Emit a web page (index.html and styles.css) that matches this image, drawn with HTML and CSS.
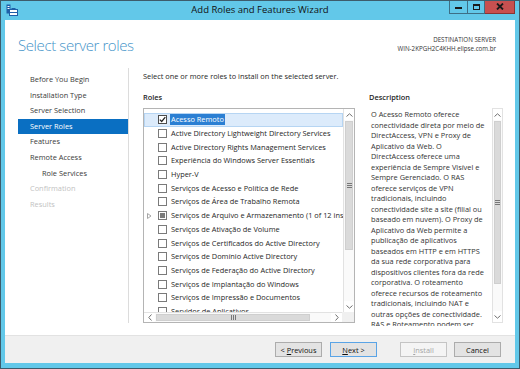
FILE: index.html
```html
<!DOCTYPE html>
<html lang="pt-BR">
<head>
  <meta charset="UTF-8">
  <title>Add Roles and Features Wizard</title>
  <link rel="stylesheet" href="styles.css">
</head>
<body>
<div class="window">
  <div class="titlebar">
    <div class="app-icon">
      <svg width="12" height="12" viewBox="0 0 12 12">
        <rect x="0.5" y="0.5" width="4" height="9" fill="#1f5fa8"/>
        <rect x="1.5" y="2" width="2" height="1" fill="#fff"/>
        <rect x="1.5" y="4" width="2" height="1" fill="#fff"/>
        <rect x="3.5" y="5.5" width="8" height="6" fill="#fff" stroke="#1f5fa8"/>
        <rect x="6" y="4.5" width="3" height="1" fill="none" stroke="#1f5fa8"/>
        <line x1="3.5" y1="8.5" x2="11.5" y2="8.5" stroke="#1f5fa8"/>
      </svg>
    </div>
    <div class="title">Add Roles and Features Wizard</div>
    <div class="caption-buttons">
      <span class="cap-btn cap-min"><svg width="7" height="6" viewBox="0 0 7 6"><rect x="0" y="3" width="7" height="2" fill="#1a1a1a"/></svg></span>
      <span class="cap-btn cap-max"><svg width="7" height="6" viewBox="0 0 7 6"><rect x="0.5" y="0.5" width="6" height="5" fill="none" stroke="#1a1a1a"/><rect x="0" y="0" width="7" height="2" fill="#1a1a1a"/></svg></span>
      <span class="cap-btn cap-close"><svg width="8" height="7" viewBox="0 0 8 7"><path d="M1 0.5 L7 6.5 M7 0.5 L1 6.5" stroke="#1a1a1a" stroke-width="1.8"/></svg></span>
    </div>
  </div>

  <div class="client">
    <div class="header">
      <h1>Select server roles</h1>
      <div class="dest">
        <div>DESTINATION SERVER</div>
        <div>WIN-2KPGH2C4KHH.elipse.com.br</div>
      </div>
    </div>

    <div class="content">
      <nav class="steps">
        <div class="step">Before You Begin</div>
        <div class="step">Installation Type</div>
        <div class="step">Server Selection</div>
        <div class="step active">Server Roles</div>
        <div class="step">Features</div>
        <div class="step">Remote Access</div>
        <div class="step sub">Role Services</div>
        <div class="step disabled">Confirmation</div>
        <div class="step disabled">Results</div>
      </nav>

      <main class="page">
        <p class="intro">Select one or more roles to install on the selected server.</p>
        <div class="columns">
          <section class="roles">
            <h2>Roles</h2>
            <div class="listbox">
              <div class="list-view">
                <div class="rows">
                  <div class="row selected"><span class="expander"></span><span class="check checked"><svg width="7" height="7" viewBox="0 0 7 7"><path d="M0.8 3.6 L2.7 5.5 L6.3 1.2" fill="none" stroke="#222" stroke-width="1.2"/></svg></span><span class="label">Acesso Remoto</span></div>
                  <div class="row"><span class="expander"></span><span class="check"></span><span class="label">Active Directory Lightweight Directory Services</span></div>
                  <div class="row"><span class="expander"></span><span class="check"></span><span class="label">Active Directory Rights Management Services</span></div>
                  <div class="row"><span class="expander"></span><span class="check"></span><span class="label">Experiência do Windows Server Essentials</span></div>
                  <div class="row"><span class="expander"></span><span class="check"></span><span class="label">Hyper-V</span></div>
                  <div class="row"><span class="expander"></span><span class="check"></span><span class="label">Serviços de Acesso e Política de Rede</span></div>
                  <div class="row"><span class="expander"></span><span class="check"></span><span class="label">Serviços de Área de Trabalho Remota</span></div>
                  <div class="row"><span class="expander"><svg width="5" height="6" viewBox="0 0 5 6"><path d="M0.5 0.5 L4 3 L0.5 5.5 Z" fill="none" stroke="#a6a6a6"/></svg></span><span class="check partial"><span class="partial-fill"></span></span><span class="label">Serviços de Arquivo e Armazenamento (1 of 12 installed)</span></div>
                  <div class="row"><span class="expander"></span><span class="check"></span><span class="label">Serviços de Ativação de Volume</span></div>
                  <div class="row"><span class="expander"></span><span class="check"></span><span class="label">Serviços de Certificados do Active Directory</span></div>
                  <div class="row"><span class="expander"></span><span class="check"></span><span class="label">Serviços de Domínio Active Directory</span></div>
                  <div class="row"><span class="expander"></span><span class="check"></span><span class="label">Serviços de Federação do Active Directory</span></div>
                  <div class="row"><span class="expander"></span><span class="check"></span><span class="label">Serviços de Implantação do Windows</span></div>
                  <div class="row"><span class="expander"></span><span class="check"></span><span class="label">Serviços de Impressão e Documentos</span></div>
                  <div class="row"><span class="expander"></span><span class="check"></span><span class="label">Servidor de Aplicativos</span></div>
                </div>
                <div class="vscroll list-vscroll">
                  <span class="arrow"><svg width="7" height="4" viewBox="0 0 7 4"><path d="M0.5 3.5 L3.5 0.8 L6.5 3.5" fill="none" stroke="#707070"/></svg></span>
                  <span class="thumb"><span class="grip-h"></span></span>
                  <span class="track"></span>
                  <span class="arrow"><svg width="7" height="4" viewBox="0 0 7 4"><path d="M0.5 0.5 L3.5 3.2 L6.5 0.5" fill="none" stroke="#707070"/></svg></span>
                </div>
              </div>
              <div class="hscroll-row">
                <div class="hscroll">
                  <span class="arrow"><svg width="4" height="7" viewBox="0 0 4 7"><path d="M3.5 0.5 L0.8 3.5 L3.5 6.5" fill="none" stroke="#707070"/></svg></span>
                  <span class="thumb"><span class="grip-v"></span></span>
                  <span class="track"></span>
                  <span class="arrow"><svg width="4" height="7" viewBox="0 0 4 7"><path d="M0.5 0.5 L3.2 3.5 L0.5 6.5" fill="none" stroke="#707070"/></svg></span>
                </div>
                <div class="corner"></div>
              </div>
            </div>
          </section>

          <section class="description">
            <h2>Description</h2>
            <div class="desc-box">
              <div class="desc-text">O Acesso Remoto oferece<br>conectividade direta por meio de<br>DirectAccess, VPN e Proxy de<br>Aplicativo da Web. O<br>DirectAccess oferece uma<br>experiência de Sempre Visível e<br>Sempre Gerenciado. O RAS<br>oferece serviços de VPN<br>tradicionais, incluindo<br>conectividade site a site (filial ou<br>baseado em nuvem). O Proxy de<br>Aplicativo da Web permite a<br>publicação de aplicativos<br>baseados em HTTP e em HTTPS<br>da sua rede corporativa para<br>dispositivos clientes fora da rede<br>corporativa. O roteamento<br>oferece recursos de roteamento<br>tradicionais, incluindo NAT e<br>outras opções de conectividade.<br>RAS e Roteamento podem ser<br>implantados no modo de locatário</div>
              <div class="vscroll desc-vscroll">
                <span class="arrow"><svg width="7" height="4" viewBox="0 0 7 4"><path d="M0.5 3.5 L3.5 0.8 L6.5 3.5" fill="none" stroke="#707070"/></svg></span>
                <span class="thumb"><span class="grip-h"></span></span>
                <span class="track"></span>
                <span class="arrow"><svg width="7" height="4" viewBox="0 0 7 4"><path d="M0.5 0.5 L3.5 3.2 L6.5 0.5" fill="none" stroke="#707070"/></svg></span>
              </div>
            </div>
          </section>
        </div>
      </main>
    </div>

    <div class="footer">
      <button class="btn btn-prev">&lt; <u>P</u>revious</button>
      <button class="btn btn-next"><u>N</u>ext &gt;</button>
      <button class="btn btn-install" disabled><u>I</u>nstall</button>
      <button class="btn btn-cancel">Cancel</button>
    </div>
  </div>
</div>
</body>
</html>
```

FILE: styles.css
```css
* {
  box-sizing: border-box;
  margin: 0;
  padding: 0;
}

:root {
  --frame: #62c8e9;
  --frame-edge: #3d5c6c;
  --text: #262626;
  --muted: #c2c2c2;
  --accent: #0a6fc2;
  --scroll-thumb: #dadada;
  --scroll-border: #e2e2e2;
}

body {
  font-family: 'Open Sans', 'Noto Sans', sans-serif;
  font-size: 7.4px;
  color: var(--text);
  background: var(--frame);
}

.window {
  width: 520px;
  height: 369px;
  border: 1px solid var(--frame-edge);
  background: var(--frame);
  display: flex;
  flex-direction: column;
  overflow: hidden;
}

/* Title bar */
.titlebar {
  height: 19px;
  flex-shrink: 0;
  display: grid;
  grid-template-columns: 1fr auto 1fr;
  align-items: start;
}

.app-icon {
  padding: 3px 0 0 5px;
}

.app-icon svg {
  display: block;
}

.title {
  font-size: 9.5px;
  line-height: 18px;
  color: #111;
}

.caption-buttons {
  display: flex;
  justify-content: flex-end;
  margin-right: 4px;
  margin-top: -1px;
}

.cap-btn {
  height: 14px;
  display: flex;
  align-items: center;
  justify-content: center;
  border: 1px solid #3d6f86;
  border-top: none;
}

.cap-min {
  width: 19px;
}

.cap-max {
  width: 17px;
  border-left: none;
}

.cap-close {
  width: 30px;
  border-left: none;
  background: #c75050;
  border-color: #8a3434;
}

/* Client area */
.client {
  flex: 1;
  min-height: 0;
  margin: 0 4px 5px 4px;
  background: #fff;
  display: flex;
  flex-direction: column;
}

.header {
  height: 48px;
  flex-shrink: 0;
  display: flex;
  justify-content: space-between;
  align-items: flex-start;
}

.header h1 {
  font-family: 'Open Sans', sans-serif;
  font-weight: 300;
  font-size: 15px;
  line-height: 20px;
  color: #4594c9;
  padding: 15px 0 0 13px;
  letter-spacing: -0.4px;
}

.dest {
  padding: 15px 19px 0 0;
  text-align: right;
  font-size: 6.2px;
  line-height: 9px;
  color: #333;
}

.content {
  flex: 1;
  min-height: 0;
  display: flex;
}

.steps {
  width: 111px;
  flex-shrink: 0;
  margin: 0 0 12px 13px;
  padding-top: 4px;
  border-right: 1px solid #dcdcdc;
}

.step {
  height: 15.6px;
  line-height: 15.6px;
  padding-left: 12px;
  white-space: nowrap;
  color: #3a3a3a;
}

.step.active {
  background: var(--accent);
  color: #fff;
}

.step.sub {
  padding-left: 24px;
}

.step.disabled {
  color: var(--muted);
}

.page {
  flex: 1;
  min-width: 0;
  padding: 2px 12px 12px 14px;
  display: flex;
  flex-direction: column;
}

.intro {
  line-height: 12px;
  margin-bottom: 9px;
}

.columns {
  flex: 1;
  min-height: 0;
  display: flex;
  gap: 14px;
}

.columns h2 {
  font-size: 7.4px;
  font-weight: 600;
  line-height: 12px;
  margin-bottom: 5px;
}

.roles {
  width: 212px;
  flex-shrink: 0;
  display: flex;
  flex-direction: column;
}

.description {
  flex: 1;
  min-width: 0;
  display: flex;
  flex-direction: column;
}

/* Roles list */
.listbox {
  flex: 1;
  min-height: 0;
  border: 1px solid #b4b4b4;
  display: flex;
  flex-direction: column;
  overflow: hidden;
}

.list-view {
  flex: 1;
  display: flex;
  min-height: 0;
}

.rows {
  flex: 1;
  min-width: 0;
  padding-top: 4px;
  overflow: hidden;
}

.row {
  height: 13.7px;
  display: flex;
  align-items: center;
  white-space: nowrap;
  border: 1px solid transparent;
}

.row.selected {
  background: #dcebfb;
  border-color: #b6d5f3;
}

.expander {
  width: 13px;
  flex-shrink: 0;
  padding-left: 2px;
  display: flex;
  align-items: center;
}

.expander svg {
  display: block;
}

.check {
  width: 9px;
  height: 9px;
  border: 1px solid #7a7a7a;
  background: #fff;
  display: flex;
  align-items: center;
  justify-content: center;
  flex-shrink: 0;
}

.check.checked {
  border-color: #4d4d4d;
}

.partial-fill {
  width: 5px;
  height: 5px;
  background: #7c7c7c;
}

.label {
  flex-shrink: 0;
  margin-left: 4px;
  line-height: 11px;
}

.row.selected .label {
  background: #2b7fd3;
  color: #fff;
  padding: 0 1px;
  margin-left: 3px;
}

/* Scrollbars */
.vscroll {
  width: 11px;
  flex-shrink: 0;
  display: flex;
  flex-direction: column;
  background: #fafafa;
  border-left: 1px solid var(--scroll-border);
}

.vscroll .arrow {
  height: 11px;
  flex-shrink: 0;
  display: flex;
  align-items: center;
  justify-content: center;
  background: #fff;
}

.vscroll .thumb {
  flex-shrink: 0;
  margin: 1px 1px 0 1px;
  background: var(--scroll-thumb);
  border: 1px solid #cfcfcf;
  display: flex;
  align-items: center;
  justify-content: center;
}

.list-vscroll .thumb {
  height: 129px;
}

.desc-vscroll .thumb {
  height: 163px;
}

.vscroll .track,
.hscroll .track {
  flex: 1;
}

.grip-h {
  width: 5px;
  height: 5px;
  border-top: 1px solid #777;
  border-bottom: 1px solid #777;
  position: relative;
}

.grip-h::after {
  content: "";
  position: absolute;
  left: 0;
  right: 0;
  top: 1px;
  border-top: 1px solid #777;
}

.hscroll-row {
  height: 10px;
  flex-shrink: 0;
  display: flex;
}

.hscroll {
  flex: 1;
  display: flex;
  background: #fafafa;
  border-top: 1px solid var(--scroll-border);
}

.hscroll .arrow {
  width: 11px;
  flex-shrink: 0;
  display: flex;
  align-items: center;
  justify-content: center;
  background: #fff;
}

.hscroll .thumb {
  width: 154px;
  flex-shrink: 0;
  margin: 1px 0 1px 1px;
  background: var(--scroll-thumb);
  border: 1px solid #cfcfcf;
  display: flex;
  align-items: center;
  justify-content: center;
}

.grip-v {
  width: 5px;
  height: 5px;
  border-left: 1px solid #777;
  border-right: 1px solid #777;
  position: relative;
}

.grip-v::after {
  content: "";
  position: absolute;
  top: 0;
  bottom: 0;
  left: 1px;
  border-left: 1px solid #777;
}

.corner {
  width: 12px;
  background: #f0f0f0;
}

/* Description */
.desc-box {
  flex: 1;
  min-height: 0;
  margin-bottom: -3px;
  display: flex;
  overflow: hidden;
}

.desc-text {
  flex: 1;
  min-width: 0;
  padding: 1px 0 0 2px;
  line-height: 10.5px;
  white-space: nowrap;
  overflow: hidden;
  color: #333;
}

.desc-vscroll {
  border: 1px solid var(--scroll-border);
  margin-bottom: 3px;
}

/* Footer */
.footer {
  height: 28px;
  flex-shrink: 0;
  background: #f0f0f0;
  border-top: 1px solid #e2e2e2;
  display: flex;
  justify-content: flex-end;
  align-items: flex-start;
  padding: 6px 14px 0 0;
}

.btn {
  width: 47px;
  height: 15px;
  font-family: inherit;
  font-size: 7.4px;
  color: #111;
  background: #e3e3e3;
  border: 1px solid #acacac;
}

.btn u {
  text-decoration-thickness: 1px;
}

.btn-next {
  margin-left: 8px;
  border-color: #5aa4e6;
}

.btn-install {
  margin-left: 23px;
  background: #f4f4f4;
  border-color: #c4c4c4;
  color: #a5a5a5;
}

.btn-cancel {
  margin-left: 7px;
}
```
